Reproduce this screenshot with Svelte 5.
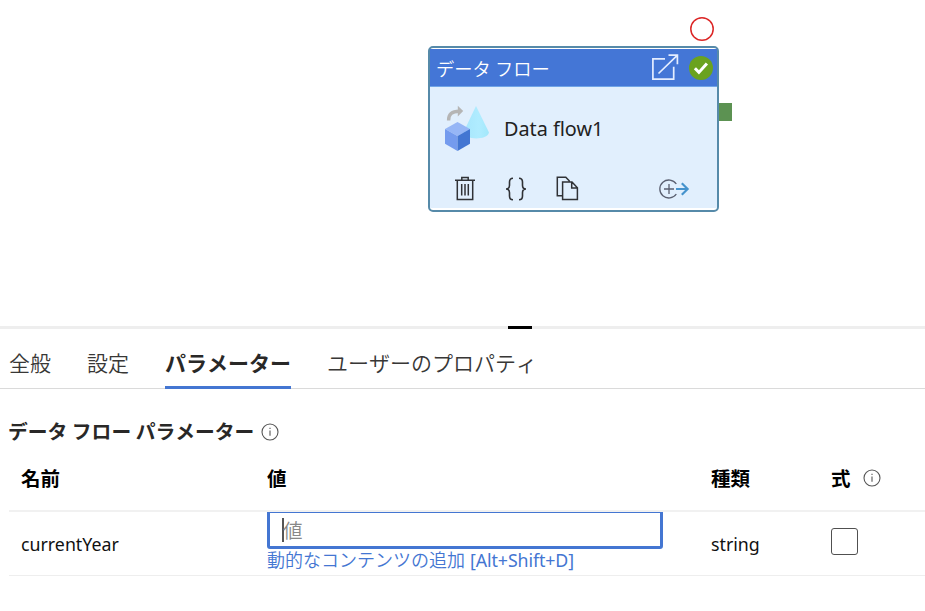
<script>
  const tabs = [
    { label: '全般', id: 'general' },
    { label: '設定', id: 'settings' },
    { label: 'パラメーター', id: 'params' },
    { label: 'ユーザーのプロパティ', id: 'user' }
  ];
  let active = $state('params');
  let checked = $state(false);
</script>

{#snippet info()}
  <svg class="info" width="18" height="18" viewBox="0 0 18 18" fill="none" stroke="#555" stroke-width="1.1">
    <circle cx="9" cy="9" r="8" /><path d="M9 7.5v5.3M9 4.8v1.3" />
  </svg>
{/snippet}

<main>
  <section class="canvas">
    <div class="node">
      <header>
        <span class="kind">データ フロー</span>
        <svg class="open" width="28" height="27" viewBox="0 0 28 27" fill="none" stroke="#e4edff" stroke-width="1.7">
          <path d="M14 4.8H1.9V25.2H22.7V12.8M7.5 19.5 26 1.7M17.5 1.2H26.4V10.2" />
        </svg>
        <svg class="ok" width="24" height="24" viewBox="0 0 24 24">
          <circle cx="12" cy="12" r="12" fill="#6aa21f" />
          <path d="m5.9 12.3 4 4.1 8-9" fill="none" stroke="#fff" stroke-width="3" />
        </svg>
      </header>
      <div class="body">
        <div class="title">
          <svg width="46" height="47" viewBox="0 0 46 47">
            <defs>
              <linearGradient id="cone" x2="1"><stop stop-color="#a6e6fc" /><stop offset=".6" stop-color="#b0ecff" /><stop offset="1" stop-color="#a2e8fb" /></linearGradient>
            </defs>
            <path d="M32 2 19.4 28.6C20 36 43 37 45 28.6Z" fill="url(#cone)" />
            <path d="M4.6 16.5C4.4 10.5 8 7.2 15 7.2" fill="none" stroke="#b5b5b5" stroke-width="3.4" />
            <path d="m13.8 1.8 5.4 5.2-5.4 5.5Z" fill="#b5b5b5" />
            <path d="M1 25 13.5 18 26 25 13.5 32Z" fill="#96b6f6" />
            <path d="M1 25 13.5 32V47L1 39.8Z" fill="#749bee" />
            <path d="M26 25 13.5 32V47L26 39.8Z" fill="#4376d2" />
          </svg>
          <span>Data flow1</span>
        </div>
        <div class="actions">
          <svg width="20" height="25" viewBox="0 0 20 25" fill="none" stroke="#303236" stroke-width="1.5">
            <path d="M0 4.3H20M2.3 4.3V23.6H17.7V4.3M6.8 4V1.4H13.2V4M6.7 8V19.5M10 8V19.5M13.3 8V19.5" />
          </svg>
          <svg class="braces" width="22" height="24" viewBox="0 0 22 24" fill="none" stroke="#303236" stroke-width="1.6">
            <path d="M8 1.3Q4.5 1.3 4.5 5V8.3Q4.5 12 1 12 4.5 12 4.5 15.7V19Q4.5 22.7 8 22.7M14 1.3Q17.5 1.3 17.5 5V8.3Q17.5 12 21 12 17.5 12 17.5 15.7V19Q17.5 22.7 14 22.7" />
          </svg>
          <svg class="copy" width="23" height="25" viewBox="0 0 23 25" fill="none" stroke="#303236" stroke-width="1.5">
            <path d="M6.3 19.8H1.3V1.2H9.8L13.2 4.8V6.1M6.6 6.1H16L21.4 11.7V23.6H6.6ZM15.7 6.1V12H21.4" />
          </svg>
          <svg class="next" width="31" height="20" viewBox="0 0 31 20" fill="none" stroke="#5a5f70" stroke-width="1.3">
            <path d="M17.3 5A9 9 0 1 0 17.3 15M5 10H15M10 5V15" />
            <path d="M17 10H28.4M22.8 4.3 28.6 10 22.8 15.7" stroke="#4593cd" stroke-width="2.2" />
          </svg>
        </div>
      </div>
      <svg class="ring" width="24" height="24" viewBox="0 0 24 24"><circle cx="12" cy="12" r="11.2" fill="#fff" stroke="#dc2626" stroke-width="1.5" /></svg>
      <span class="port"></span>
    </div>
  </section>

  <div class="splitter"><span></span></div>

  <nav>
    {#each tabs as tab}
      <button class="tab" class:active={active === tab.id} onclick={() => (active = tab.id)}>{tab.label}</button>
    {/each}
  </nav>

  <section class="panel">
    <h2><span>データ フロー パラメーター</span>{@render info()}</h2>
    <div class="row head">
      <span>名前</span><span>値</span><span>種類</span><span class="expr">式 {@render info()}</span>
    </div>
    <div class="row data">
      <span class="text">currentYear</span>
      <div class="value">
        <div class="field"><i></i><span>値</span></div>
        <a href="#dynamic">動的なコンテンツの追加 <span>[Alt+Shift+D]</span></a>
      </div>
      <span class="text">string</span>
      <button class="check" aria-label="式" aria-pressed={checked} onclick={() => (checked = !checked)}></button>
    </div>
  </section>
</main>

<style>
  :global(body) { background: #fff; overflow: hidden; }
  main { width: 925px; height: 611px; display: flex; flex-direction: column; font-family: "Noto Sans", "Noto Sans CJK JP", sans-serif; color: #111; white-space: nowrap; }
  svg { display: block; flex: none; }
  button { font: inherit; background: none; border: 0; padding: 0; margin: 0; color: inherit; }
  .canvas { height: 326px; box-sizing: border-box; padding: 46px 0 0 428px; }
  .node { position: relative; box-sizing: border-box; width: 291px; height: 166px; border: 2px solid #568aa9; border-radius: 5px; padding: 1px 0 1px; }
  header { display: flex; align-items: center; height: 37px; background: #4476d6; border-bottom: 1px solid #70a4e6; color: #fff; padding-left: 6px; }
  .kind { width: 215px; font: 350 18.3px/34px "Noto Sans CJK JP", sans-serif; }
  .ok { margin-left: 10px; }
  .body { height: 121px; background: #e1effd; }
  .title { display: flex; padding: 17px 0 0 14px; height: 47px; }
  .title span { margin-left: 14px; font-size: 19.8px; line-height: 49px; color: #222; }
  .actions { display: flex; align-items: center; padding: 25px 0 0 25px; height: 25px; }
  .braces { margin-left: 30px; }
  .copy { margin-left: 29px; }
  .next { margin-left: 80px; }
  .ring { position: absolute; left: 260px; top: -31px; }
  .port { position: absolute; left: 289px; top: 55px; width: 13px; height: 18px; background: #5c9252; }
  .splitter { height: 3px; background: #eee; }
  .splitter span { display: block; width: 24px; height: 3px; margin-left: 508px; background: #000; }
  nav { display: flex; height: 59px; border-bottom: 1px solid #dadada; padding-left: 9px; gap: 36px; }
  .tab { height: 60px; box-sizing: border-box; padding-top: 9px; font: 350 21px/57px "Noto Sans CJK JP", sans-serif; font-kerning: none; color: #383736; border-bottom: 3px solid transparent; display: flex; align-items: center; }
  .tab.active { font-weight: 700; color: #292827; border-color: #4476d2; }
  .panel { padding-left: 9px; }
  h2 { display: flex; align-items: center; height: 28px; margin: 29px 0 0; font: 700 19.8px/28px "Noto Sans CJK JP", sans-serif; font-kerning: none; color: #292827; }
  h2 span { width: 253px; margin-left: -1px; padding-bottom: 2px; }
  .row { display: grid; grid-template-columns: 246px 444px 120px 1fr; padding-left: 12px; }
  .head { height: 64px; border-bottom: 2px solid #f1f1f1; font: 700 19.5px/64px "Noto Sans CJK JP", sans-serif; color: #000; }
  .expr { display: flex; align-items: center; gap: 12px; }
  .data { height: 63px; border-bottom: 1px solid #eee; }
  .text { font-size: 17.8px; line-height: 64px; }
  .field { width: 396px; height: 37px; box-sizing: border-box; border: 3px solid #4476d2; border-top-width: 1px; border-radius: 0 0 3px 3px; display: flex; align-items: center; padding-left: 12px; color: #888; font: 350 19.5px/33px "Noto Sans CJK JP", sans-serif; }
  .field i { width: 2px; height: 24px; background: #555; margin-right: -1px; }
  a { display: block; color: #4476d2; text-decoration: none; font: 350 18px/21px "Noto Sans CJK JP", sans-serif; }
  a span { font-family: "Noto Sans", sans-serif; font-size: 17.8px; font-weight: 400; letter-spacing: -.1px; margin-left: 1px; }
  .check { width: 27px; height: 27px; box-sizing: border-box; margin-top: 16px; border: 1px solid #505050; border-radius: 3px; }
</style>
